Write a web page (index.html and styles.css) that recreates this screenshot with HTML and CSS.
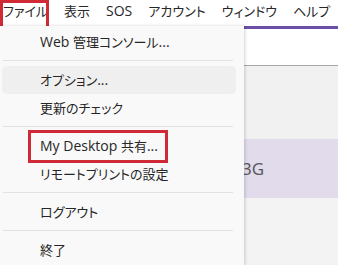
FILE: index.html
```html
<!DOCTYPE html>
<html lang="ja">
<head>
<meta charset="utf-8">
<link rel="stylesheet" href="styles.css">
</head>
<body>
<div class="app">
  <nav class="menubar">
    <span class="menu-title marked">ファイル</span>
    <span class="menu-title">表示</span>
    <span class="menu-title"><span class="latin">SOS</span></span>
    <span class="menu-title">アカウント</span>
    <span class="menu-title">ウィンドウ</span>
    <span class="menu-title">ヘルプ</span>
  </nav>
  <div class="workspace">
    <div class="accent"></div>
    <div class="toolbar"></div>
    <div class="panel"></div>
    <div class="row-selected"><span class="cell">3G</span></div>
    <div class="rest"></div>
  </div>
  <div class="dropdown">
    <div class="item"><span class="latin">Web </span>管理コンソール<span class="latin">...</span></div>
    <div class="sep"></div>
    <div class="item hover">オプション<span class="latin">...</span></div>
    <div class="item">更新のチェック</div>
    <div class="sep"></div>
    <div class="item"><span class="marked-text"><span class="latin">My Desktop </span>共有<span class="latin">...</span></span></div>
    <div class="item">リモートプリントの設定</div>
    <div class="sep"></div>
    <div class="item">ログアウト</div>
    <div class="sep"></div>
    <div class="item">終了</div>
  </div>
</div>
</body>
</html>
```
FILE: styles.css
```css
* { box-sizing: border-box; }
html, body {
  margin: 0;
  padding: 0;
  width: 338px;
  height: 265px;
  overflow: hidden;
  background: #ffffff;
}
body {
  font-family: "Noto Sans CJK JP", "Noto Sans", sans-serif;
  font-size: 13px;
  color: #262626;
  font-feature-settings: "palt";
}
.latin {
  font-family: "Open Sans", "Noto Sans", sans-serif;
  font-size: 14px;
}
.app {
  position: relative;
  width: 338px;
  height: 265px;
  display: flex;
  flex-direction: column;
}
.menubar {
  height: 26px;
  display: flex;
  align-items: flex-start;
  gap: 16px;
  padding-left: 3px;
  background: #ffffff;
}
.menu-title {
  position: relative;
  line-height: 22px;
  white-space: nowrap;
}
.marked::after {
  content: "";
  position: absolute;
  left: -3px;
  top: 0;
  right: -1px;
  height: 24px;
  border: 3px solid #cf2a35;
}
.workspace {
  flex: 1;
  display: flex;
  flex-direction: column;
}
.accent {
  height: 3px;
  background: #6c4fa6;
}
.toolbar {
  height: 37px;
  background: #ffffff;
  border-bottom: 1px solid #a6a6a6;
}
.panel {
  height: 73px;
  background: #f1f1f1;
}
.row-selected {
  height: 59px;
  background: #e1dbeb;
  display: flex;
  align-items: center;
  padding-left: 242px;
}
.cell {
  font-family: "Noto Sans", sans-serif;
  font-size: 17px;
  color: #5a5a5a;
}
.rest {
  flex: 1;
  background: #f3f3f3;
}
.dropdown {
  position: absolute;
  left: 0;
  top: 26px;
  width: 244px;
  bottom: 0;
  background: #f9f9f9;
  box-shadow: 1px 0 3px rgba(0, 0, 0, 0.18);
  padding: 2px 8px 0 2px;
  display: flex;
  flex-direction: column;
}
.item {
  height: 28px;
  line-height: 28px;
  padding-left: 38px;
  border-radius: 5px;
  white-space: nowrap;
}
.item.hover {
  background: #efefef;
}
.sep {
  height: 1px;
  margin: 4px 3px 5px 1px;
  background: #e2e2e2;
  flex: none;
}
.marked-text {
  position: relative;
}
.marked-text::after {
  content: "";
  position: absolute;
  left: -12px;
  right: -10px;
  top: -6px;
  bottom: -8px;
  border: 3px solid #cf2a35;
}
```
